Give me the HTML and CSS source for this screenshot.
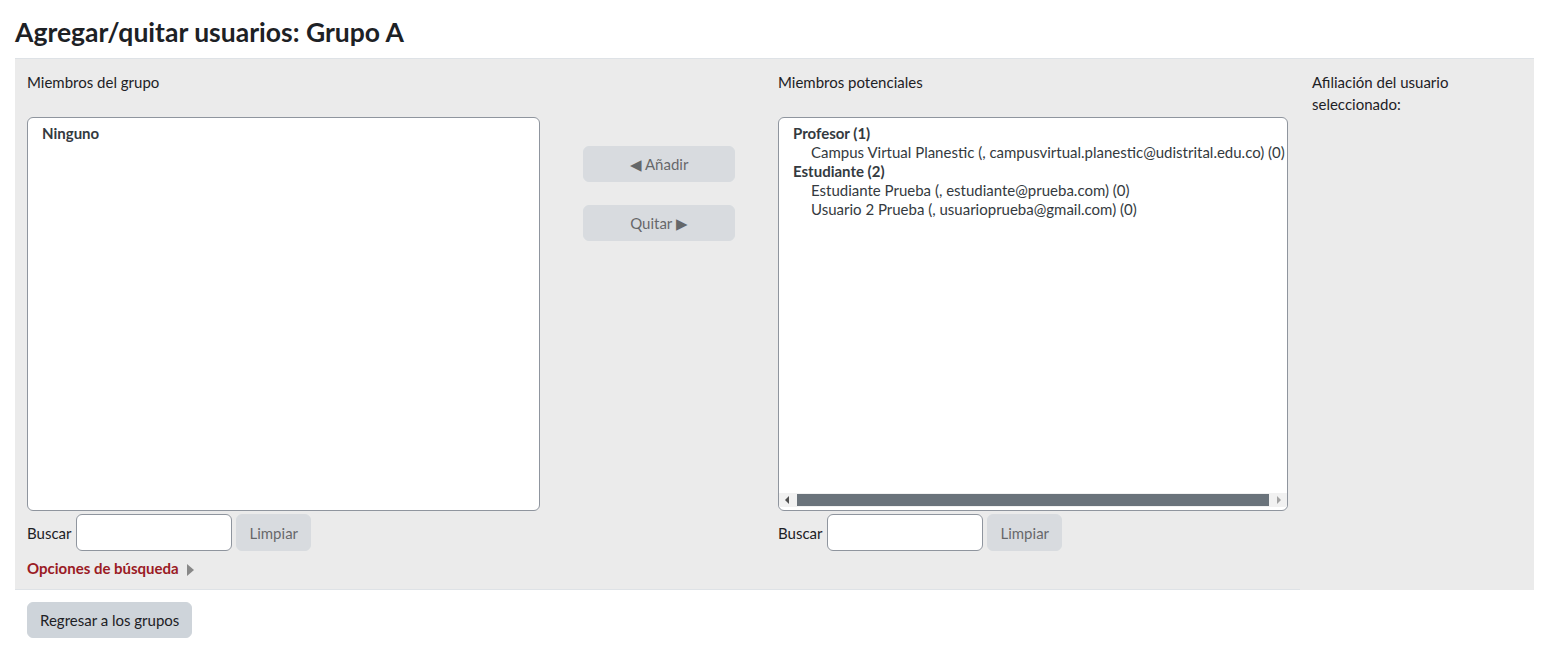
FILE: index.html
```html
<!DOCTYPE html>
<html lang="es">
<head>
    <meta charset="UTF-8">
    <meta name="viewport" content="width=device-width, initial-scale=1.0">
    <title>Agregar/quitar usuarios: Grupo A</title>
    <link rel="stylesheet" href="styles.css">
</head>
<body>
    <h2 class="page-title">Agregar/quitar usuarios: Grupo A</h2>

    <div class="group-table">
        <div class="cell cell-existing">
            <p class="cell-label">Miembros del grupo</p>
            <div class="userlist">
                <div class="group-label">Ninguno</div>
            </div>
            <div class="search-row">
                <label for="removeselect_searchtext">Buscar</label>
                <input type="text" id="removeselect_searchtext">
                <button class="btn" disabled>Limpiar</button>
            </div>
            <div class="search-options">
                <a href="#">Opciones de búsqueda</a>
                <span class="caret"></span>
            </div>
        </div>

        <div class="cell cell-buttons">
            <button class="btn btn-move" disabled>&#9664; Añadir</button>
            <button class="btn btn-move" disabled>Quitar &#9654;</button>
        </div>

        <div class="cell cell-potential">
            <p class="cell-label">Miembros potenciales</p>
            <div class="userlist has-scroll">
                <div class="userlist-inner">
                    <div class="group-label">Profesor (1)</div>
                    <div class="user">Campus Virtual Planestic (, campusvirtual.planestic@udistrital.edu.co) (0)</div>
                    <div class="group-label">Estudiante (2)</div>
                    <div class="user">Estudiante Prueba (, estudiante@prueba.com) (0)</div>
                    <div class="user">Usuario 2 Prueba (, usuarioprueba@gmail.com) (0)</div>
                </div>
                <div class="hscroll">
                    <span class="arrow arrow-left"></span>
                    <span class="thumb"></span>
                    <span class="arrow arrow-right"></span>
                </div>
            </div>
            <div class="search-row">
                <label for="addselect_searchtext">Buscar</label>
                <input type="text" id="addselect_searchtext">
                <button class="btn" disabled>Limpiar</button>
            </div>
        </div>

        <div class="cell cell-info">
            <p class="cell-label">Afiliación del usuario seleccionado:</p>
        </div>
    </div>

    <div class="footer-actions">
        <button class="btn btn-back">Regresar a los grupos</button>
    </div>
</body>
</html>
```

FILE: styles.css
```css
body {
    font-family: Lato, "Open Sans", sans-serif;
    font-size: 15px;
    line-height: 1.5;
    color: #1d2125;
    margin: 0;
    padding: 0 16px 0 15px;
    background: #fff;
}
.page-title {
    font-size: 26.5px;
    font-weight: 700;
    line-height: 1.2;
    margin: 17px 0 9px 0;
}
.group-table {
    display: grid;
    grid-template-columns: 537px 214px 534px 1fr;
    background-color: #ebebeb;
    border-top: 1px solid #dee2e6;
}
.cell {
    padding: 12px 12px 9px 12px;
}
.cell-existing, .cell-buttons, .cell-potential {
    border-bottom: 1px solid #dee2e6;
}
.cell-label {
    margin: 0 0 24px 0;
}
.userlist {
    background: #fff;
    border: 1px solid #8f959e;
    border-radius: 6px;
    height: 394px;
    padding: 6px 0 0 14px;
    box-sizing: border-box;
    line-height: 19px;
    overflow: hidden;
    position: relative;
}
.userlist-inner {
    white-space: nowrap;
}
.group-label {
    font-weight: 700;
    color: #343a40;
}
.user {
    padding-left: 18px;
    color: #343a40;
}
.hscroll {
    position: absolute;
    left: 0;
    right: 0;
    bottom: 3px;
    height: 14px;
    display: flex;
    align-items: center;
    background: #f1f1f1;
}
.hscroll .thumb {
    flex: 1;
    height: 12px;
    background: #6a737b;
    margin: 0 2px;
}
.arrow {
    width: 0;
    height: 0;
    border-top: 4px solid transparent;
    border-bottom: 4px solid transparent;
    margin: 0 6px;
}
.arrow-left {
    border-right: 4px solid #505050;
}
.arrow-right {
    border-left: 4px solid #a3a3a3;
}
.search-row {
    display: flex;
    align-items: center;
    margin-top: 3px;
    gap: 4px;
}
.search-row label {
    margin-right: 1px;
}
.search-row input {
    width: 156px;
    height: 37px;
    box-sizing: border-box;
    border: 1px solid #8f959e;
    border-radius: 6px;
    padding: 6px 10px;
    font-family: inherit;
    font-size: 15px;
}
.btn {
    font-family: inherit;
    font-size: 15px;
    line-height: 1.5;
    color: #1d2125;
    background-color: #ced4da;
    border: 1px solid #ced4da;
    border-radius: 6px;
    padding: 6px 12px;
    height: 37px;
    cursor: pointer;
}
.btn:disabled {
    opacity: 0.65;
    cursor: default;
}
.search-options {
    display: flex;
    align-items: center;
    gap: 8px;
    margin-top: 6px;
}
.search-options a {
    color: #9a1a24;
    font-weight: 700;
    text-decoration: none;
}
.caret {
    width: 0;
    height: 0;
    border-top: 6px solid transparent;
    border-bottom: 6px solid transparent;
    border-left: 7px solid #888;
    margin-top: 2px;
}
.cell-buttons {
    display: flex;
    flex-direction: column;
    align-items: center;
    padding-top: 87px;
    gap: 23px;
}
.btn-move {
    width: 152px;
    height: 36px;
}
.cell-info .cell-label {
    margin: 0;
}
.footer-actions {
    padding: 12px 12px;
}
.btn-back {
    height: 36px;
    padding: 6px 12px;
}
```
